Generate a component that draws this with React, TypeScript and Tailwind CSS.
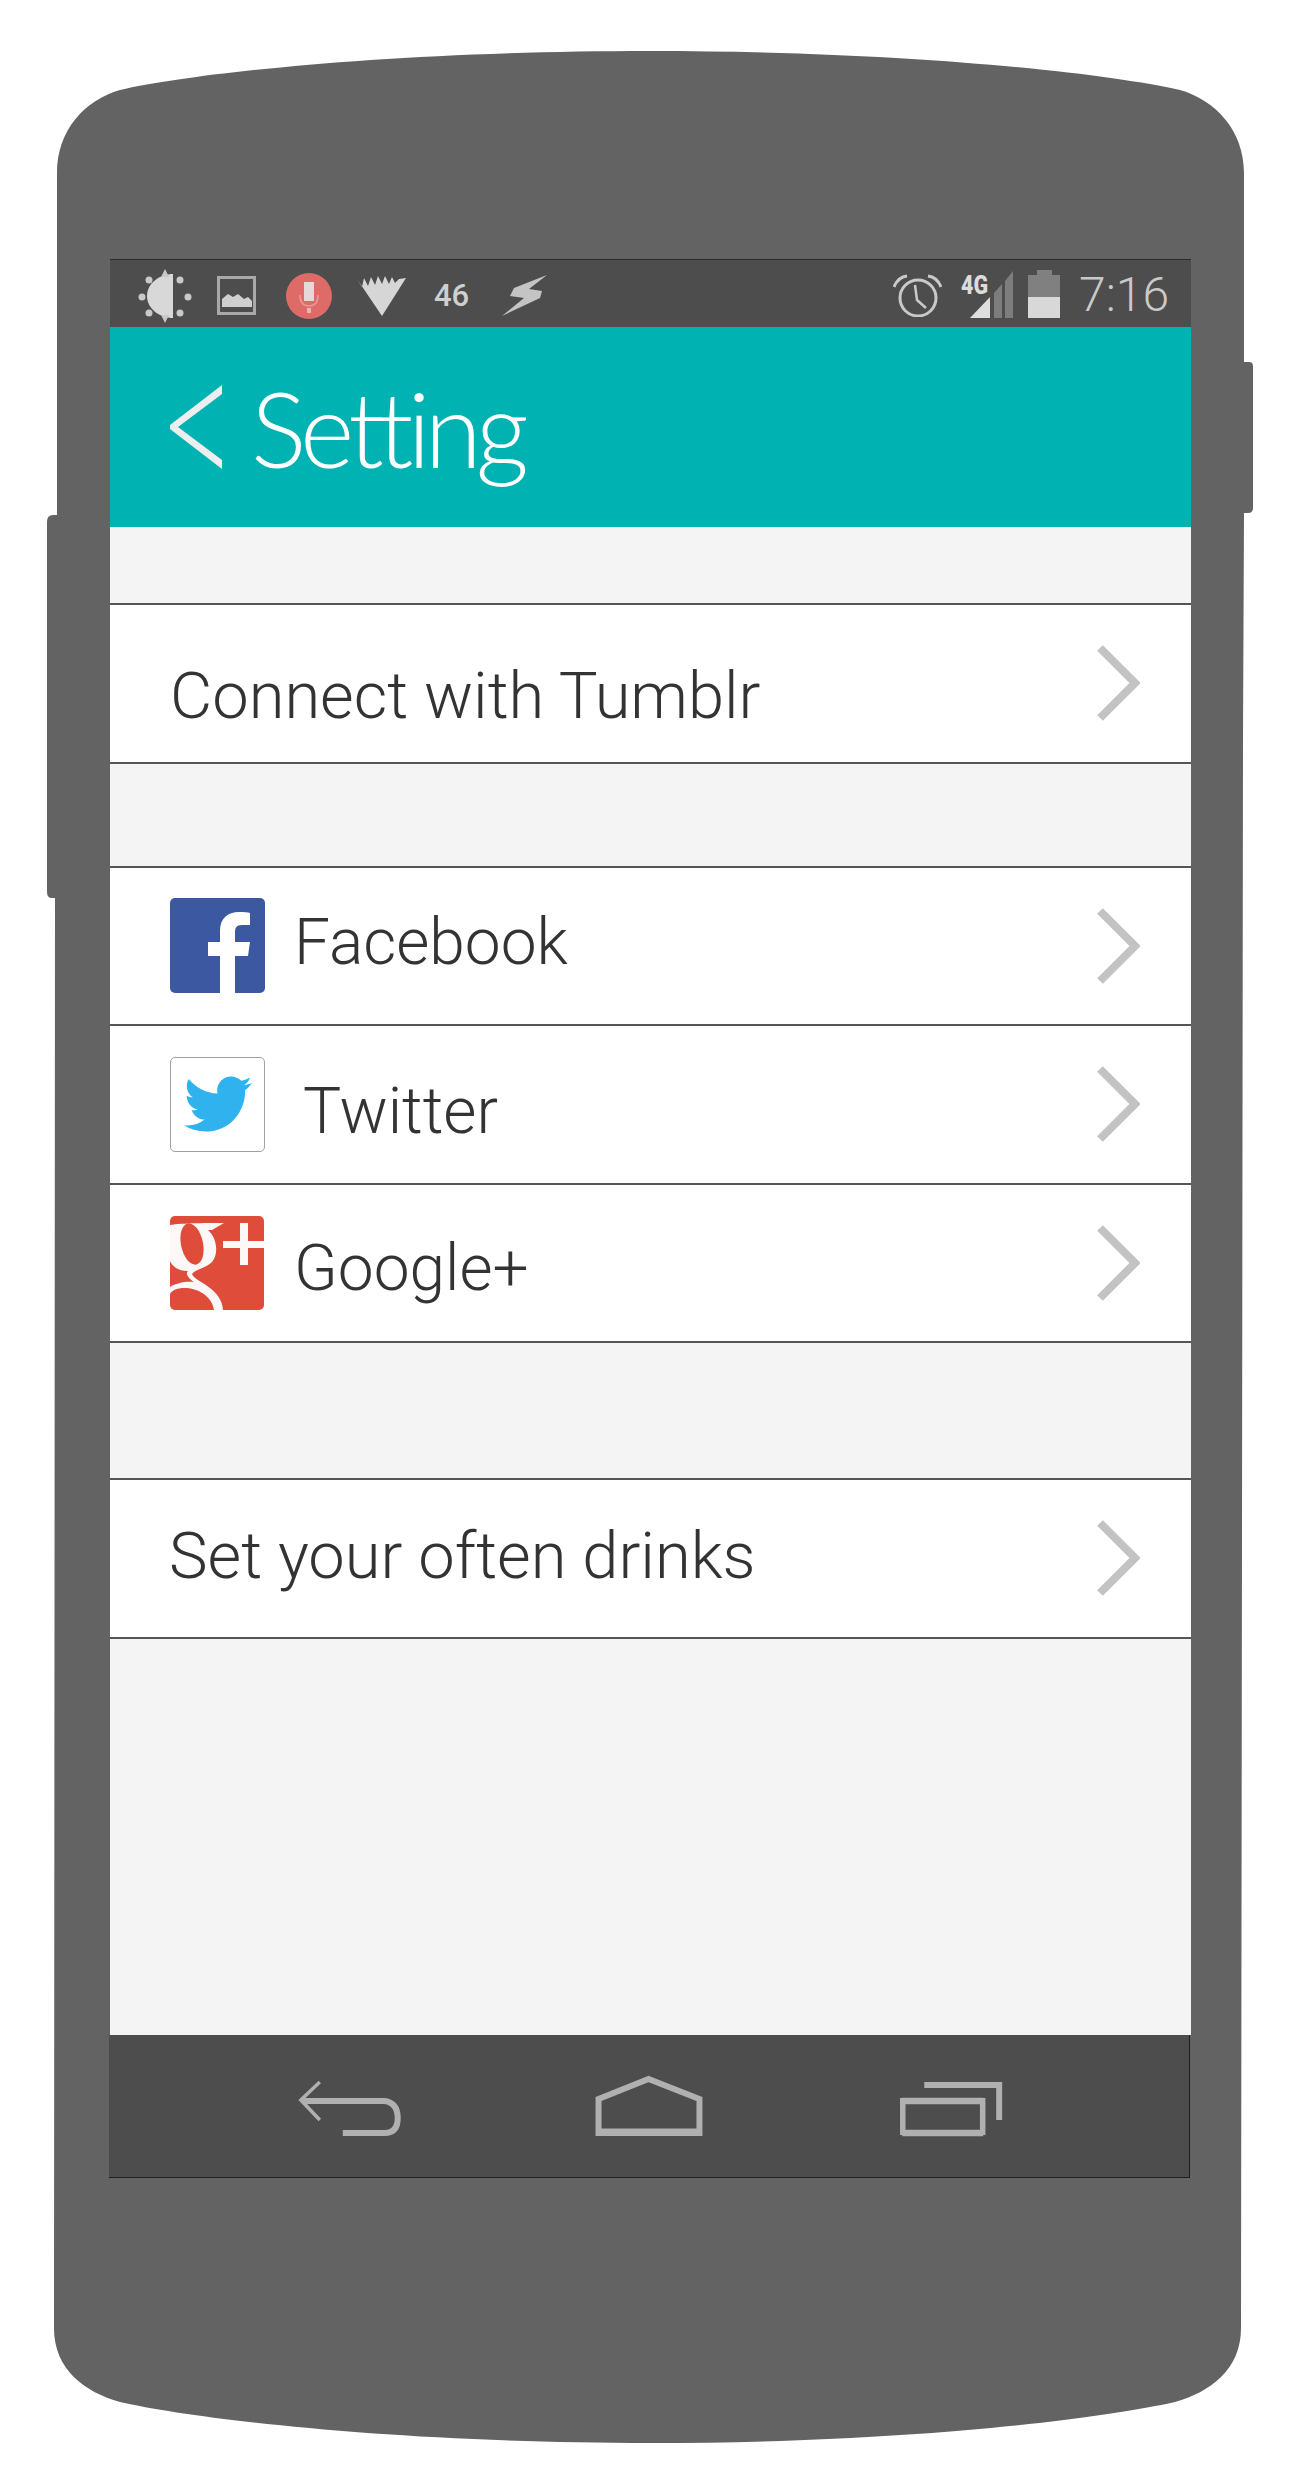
import { FaTwitter } from 'react-icons/fa';

function PhoneBody() {
  return (
    <svg className="absolute inset-0" width="1300" height="2470" viewBox="0 0 1300 2470">
      <path
        fill="#636363"
        d="M120 90 C200 72 400 51 650 51 C900 51 1100 72 1180 90 C1215 100 1244 130 1244 173 L1244 362 L1249 362 Q1253 362 1253 366 L1253 508 Q1253 513 1248 513 L1244 513 L1243 735 L1241 2328 C1241 2370 1210 2392 1175 2402 C1095 2420 900 2443 650 2443 C400 2443 200 2420 120 2402 C85 2392 54 2370 54 2328 L55 898 L52 898 Q47 898 47 892 L47 522 Q47 515 53 515 L57 515 L57 173 C57 130 85 100 120 90 Z"
      />
    </svg>
  );
}

function Chevron() {
  return (
    <svg width="43" height="76" viewBox="0 0 43 76" className="shrink-0">
      <path d="M3 3 L38 38 L3 73" fill="none" stroke="#c3c3c3" strokeWidth="8" />
    </svg>
  );
}

function Row({ children }: { children: React.ReactNode }) {
  return (
    <div className="flex h-[158.5px] items-center justify-between border-t-2 border-[#555] bg-white pr-[51px] pl-[60px]">
      <div className="flex items-center">{children}</div>
      <Chevron />
    </div>
  );
}

function StatusBar() {
  return (
    <div className="flex h-[68px] items-center justify-between border-t border-[#2c2c2c] bg-[#4d4d4d] pr-[22px] pl-[28px]">
      <div className="flex items-center">
        <svg width="54" height="54" viewBox="0 0 54 54" className="mt-[4px] blur-[0.5px]">
          <path d="M35 5 C22 5 9 14 9 27 C9 40 22 49 35 49 Z" fill="#d8d8d8" />
          <g fill="#c9c9c9">
            <path d="M27 0 L31 8 L23 8 Z" />
            <path d="M27 54 L31 46 L23 46 Z" />
            <circle cx="4" cy="28" r="3.5" />
            <circle cx="50" cy="28" r="3.5" />
            <circle cx="11" cy="11" r="3.5" />
            <circle cx="42" cy="11" r="3.5" />
            <circle cx="11" cy="44" r="3.5" />
            <circle cx="42" cy="44" r="3.5" />
          </g>
        </svg>
        <svg width="39" height="39" viewBox="0 0 39 39" className="mt-[4px] ml-[25px] blur-[0.4px]">
          <rect x="1.5" y="1.5" width="36" height="36" fill="none" stroke="#a9a9a9" strokeWidth="3" />
          <path d="M5 31 L5 23 L11 18 L16 21 L21 18 L27 23 L31 21 L35 25 L35 31 Z" fill="#cfcfcf" />
        </svg>
        <svg width="46" height="46" viewBox="0 0 46 46" className="mt-[4px] ml-[30px] blur-[0.4px]">
          <circle cx="23" cy="23" r="23" fill="#df6b69" />
          <rect x="18" y="9" width="10" height="19" fill="#e6d8d8" />
          <path d="M14 22 Q14 33 23 33 Q32 33 32 22" fill="none" stroke="#e79a98" strokeWidth="1.5" />
          <rect x="21" y="35" width="4" height="5" fill="#e9b5b4" />
        </svg>
        <svg width="49" height="41" viewBox="0 0 49 41" className="mt-[4px] ml-[25px] blur-[0.4px]">
          <polygon
            points="0,4 5,12 7,3 11,11 14,2 18,10 21,1 25,9 28,1 32,9 35,2 38,8 42,4 49,3 25,41"
            fill="#d6d6d6"
          />
        </svg>
        <span className="mt-[4px] ml-[28px] w-[36px] font-[Roboto] text-[31px] leading-none font-medium text-[#cfcfcf]">46</span>
        <svg width="46" height="43" viewBox="0 0 46 43" className="mt-[4px] ml-[32px] blur-[0.6px]">
          <polygon points="45,1 12,14 8,22 22,24 0,42 38,24 40,17 27,15" fill="#c4c4c4" />
        </svg>
      </div>
      <div className="flex items-center">
        <svg width="49" height="43" viewBox="0 0 49 43" className="mt-[4px] blur-[0.3px]">
          <circle cx="25" cy="24" r="18" fill="none" stroke="#c9c9c9" strokeWidth="3" />
          <path d="M22 11 L24 26 L33 34" fill="none" stroke="#c9c9c9" strokeWidth="2.5" />
          <path d="M1 13 Q5 3 14 2 M48 13 Q44 3 35 2" fill="none" stroke="#c9c9c9" strokeWidth="3" />
        </svg>
        <svg width="52" height="48" viewBox="0 0 52 48" className="ml-[19px]">
          <polygon points="33,23 41,14 41,48 33,48" fill="#7d7d7d" />
          <polygon points="44,11 52,1 52,48 44,48" fill="#7d7d7d" />
          <polygon points="9,48 29,27 29,48" fill="#dedede" />
          <text x="0" y="24" fontFamily="Roboto" fontWeight="900" fontSize="26" textLength="27" lengthAdjust="spacingAndGlyphs" fill="#dcdcdc">
            4G
          </text>
        </svg>
        <div className="ml-[15px] flex w-[32px] flex-col items-center">
          <div className="h-[5px] w-[15px] bg-[#808080]" />
          <div className="h-[22px] w-full bg-[#808080]" />
          <div className="h-[21px] w-full bg-[#d8d8d8]" />
        </div>
        <span className="mt-[3px] ml-[19px] font-[Roboto] text-[48px] leading-none font-light text-[#c9c9c9]">7:16</span>
      </div>
    </div>
  );
}

function Header() {
  return (
    <div className="flex h-[200px] items-center bg-[#00b2b2] pl-[60px]">
      <svg width="52" height="84" viewBox="0 0 52 84" className="shrink-0">
        <polygon points="52,0 0,40 0,44 52,84 52,75 8,42 52,9" fill="#eeeeee" />
      </svg>
      <span className="mt-[2px] ml-[29px] font-[Lato] text-[104px] leading-none font-light tracking-[-6px] text-white">Setting</span>
    </div>
  );
}

function NavBar() {
  return (
    <div className="-ml-px flex h-[143px] w-[1081px] border-r border-b border-[#1f1f1f] bg-[#4d4d4d]">
      <svg width="1081" height="143" viewBox="0 0 1081 143" fill="none" stroke="#b0b0b0">
        <path d="M211 47 L192 65 L211 85" strokeWidth="3.5" />
        <path d="M193 66 L276 66 Q289 68 289 83 Q289 98 276 98 L234 98" strokeWidth="6" />
        <path d="M490 98 L490 64 L540 44 L591 64 L591 98 Z" strokeWidth="6" />
        <path d="M488 97 L593 97" strokeWidth="7" />
        <path d="M794 66 L875 66 M794 98 L875 98" strokeWidth="6.5" />
        <path d="M794.5 63 L794.5 100 M874.5 63 L874.5 100" strokeWidth="5.5" />
        <path d="M816 50 L891 50 L891 85" strokeWidth="6" />
      </svg>
    </div>
  );
}

function GooglePlusIcon() {
  return (
    <svg width="94" height="94" viewBox="0 0 94 94" className="shrink-0 rounded-[5px]">
      <rect width="94" height="94" fill="#df4c3a" />
      <path
        d="M0 9 C12 7 40 7 54 7 L42 14 L38 14 C47 22 49 38 42 46 C36 52 26 53 22 58 C25 66 52 72 53 94 L44 94 C42 80 28 72 14 72 C8 72 2 74 0 78 L0 71 C6 67 16 65 24 66 C18 62 15 57 18 55 C8 55 2 50 0 45 Z"
        fill="#fbf8f7"
      />
      <ellipse cx="22" cy="28" rx="11" ry="21" transform="rotate(-12 22 28)" fill="#df4c3a" />
      <path d="M70 7 H78 V49 H70 Z M53 25 H94 V32 H53 Z" fill="#fbf8f7" />
    </svg>
  );
}

export default function App() {
  return (
    <div className="relative h-[2470px] w-[1300px] overflow-hidden bg-white pt-[259px] pl-[110px]">
      <PhoneBody />
      <div className="relative flex h-[1919px] w-[1081px] flex-col">
        <StatusBar />
        <Header />
        <div className="flex flex-1 flex-col bg-[#f4f4f4] pt-[76px] font-[Roboto] font-light text-[#333]">
          <Row>
            <span className="mt-[27px] text-[65px] leading-none">Connect with Tumblr</span>
          </Row>
          <div className="h-[104px] border-t-2 border-[#555]" />
          <Row>
            <svg width="95" height="95" viewBox="0 0 95 95" className="shrink-0 rounded-[5px]">
              <rect width="95" height="95" fill="#3b58a0" />
              <path
                d="M50 95 L50 58 L38 58 L38 44 L50 44 L50 33 C50 20 58 14 69 14 C74 14 78 14 80 15 L80 27 L72 27 C66 27 65 30 65 35 L65 44 L80 44 L78 58 L65 58 L65 95 Z"
                fill="#ffffff"
              />
            </svg>
            <span className="mb-[6px] ml-[29px] text-[64px] leading-none">Facebook</span>
          </Row>
          <Row>
            <div className="flex h-[95px] w-[95px] shrink-0 items-center justify-center rounded-[5px] border border-[#a0a0a0] bg-white">
              <FaTwitter className="text-[68px] text-[#2fb2ee]" />
            </div>
            <span className="mt-[15px] ml-[38px] text-[64px] leading-none">Twitter</span>
          </Row>
          <Row>
            <GooglePlusIcon />
            <span className="mt-[12px] ml-[30px] text-[64px] leading-none">Google+</span>
          </Row>
          <div className="h-[137px] border-t-2 border-[#555]" />
          <Row>
            <span className="mb-[3px] -ml-px text-[65px] leading-none">Set your often drinks</span>
          </Row>
          <div className="flex-1 border-t-2 border-[#555]" />
        </div>
        <NavBar />
      </div>
    </div>
  );
}
